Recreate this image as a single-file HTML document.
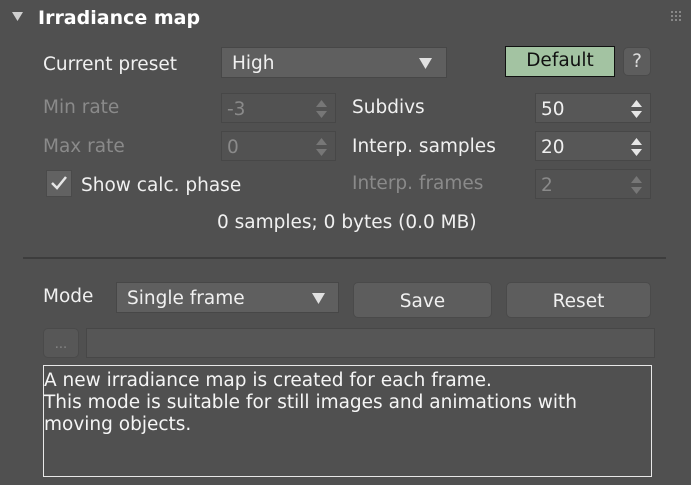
<!DOCTYPE html>
<html><head><style>
body{margin:0;width:691px;height:485px;background:#505050;font-family:"DejaVu Sans","Liberation Sans",sans-serif;color:#f0f0f0;position:relative;overflow:hidden}
.a{position:absolute;white-space:nowrap}
.lbl{font-size:18.5px;line-height:20px;margin-top:2px}
.dis{color:#8a8a8a}
.fld{position:absolute;background:#575757;border:1px solid #474747;box-sizing:border-box}
.fld span{position:absolute;left:5px;top:5px;font-size:18.5px}
.spin{position:absolute;right:8px;top:6px;width:11px;height:18px}
.btn{position:absolute;background:#5d5d5d;border:1px solid #4a4a4a;border-radius:5px;box-sizing:border-box;text-align:center;font-size:18.5px}
</style></head><body>
<svg class="a" style="left:12px;top:12px" width="12" height="10"><polygon points="0,0 11,0 5.5,9" fill="#cfcfcf"/></svg>
<div class="a" style="left:38px;top:7px;font-size:19px;font-weight:bold;color:#fff">Irradiance map</div>
<svg class="a" style="left:671px;top:11px" width="12" height="12" fill="#888"><rect x="0" y="0" width="2" height="2"/><rect x="4" y="0" width="2" height="2"/><rect x="8" y="0" width="2" height="2"/><rect x="0" y="4" width="2" height="2"/><rect x="4" y="4" width="2" height="2"/><rect x="8" y="4" width="2" height="2"/><rect x="0" y="8" width="2" height="2"/><rect x="4" y="8" width="2" height="2"/><rect x="8" y="8" width="2" height="2"/></svg>

<div class="a lbl" style="left:43px;top:53px">Current preset</div>
<div class="fld" style="left:221px;top:47px;width:226px;height:31px;background:#5f5f5f"><span style="left:10px;top:5px">High</span>
<svg style="position:absolute;right:14px;top:10px" width="13" height="11"><polygon points="0,0 13,0 6.5,11" fill="#e0e0e0"/></svg></div>
<div class="a" style="left:505px;top:46px;width:110px;height:31px;background:#a3c3a2;border:1px solid #111;box-sizing:border-box;color:#111;font-size:18.5px;text-align:center;line-height:27px">Default</div>
<div class="btn" style="left:623px;top:47px;width:28px;height:29px;line-height:27px;color:#ddd">?</div>

<div class="a lbl dis" style="left:43px;top:96px">Min rate</div>
<div class="fld" style="left:221px;top:93px;width:115px;height:30px;background:#525252"><span class="dis">-3</span><svg class="spin"><polygon points="5.5,0 11,7 0,7" fill="#777"/><polygon points="0,11 11,11 5.5,18" fill="#777"/></svg></div>
<div class="a lbl dis" style="left:43px;top:135px">Max rate</div>
<div class="fld" style="left:221px;top:131px;width:115px;height:30px;background:#525252"><span class="dis">0</span><svg class="spin"><polygon points="5.5,0 11,7 0,7" fill="#777"/><polygon points="0,11 11,11 5.5,18" fill="#777"/></svg></div>

<div class="a lbl" style="left:352px;top:96px">Subdivs</div>
<div class="fld" style="left:535px;top:93px;width:116px;height:30px"><span>50</span><svg class="spin"><polygon points="5.5,0 11,7 0,7" fill="#e6e6e6"/><polygon points="0,11 11,11 5.5,18" fill="#e6e6e6"/></svg></div>
<div class="a lbl" style="left:352px;top:135px">Interp. samples</div>
<div class="fld" style="left:535px;top:131px;width:116px;height:30px"><span>20</span><svg class="spin"><polygon points="5.5,0 11,7 0,7" fill="#e6e6e6"/><polygon points="0,11 11,11 5.5,18" fill="#e6e6e6"/></svg></div>
<div class="a lbl dis" style="left:352px;top:172px">Interp. frames</div>
<div class="fld" style="left:535px;top:169px;width:116px;height:30px;background:#525252"><span class="dis">2</span><svg class="spin"><polygon points="5.5,0 11,7 0,7" fill="#777"/><polygon points="0,11 11,11 5.5,18" fill="#777"/></svg></div>

<div class="a" style="left:46px;top:170px;width:26px;height:27px;background:#626262;border:1px solid #4a4a4a;box-sizing:border-box"></div>
<svg class="a" style="left:50px;top:175px" width="18" height="16"><path d="M2 8 L7 13 L16 2" stroke="#e6e6e6" stroke-width="2.5" fill="none"/></svg>
<div class="a lbl" style="left:81px;top:174px">Show calc. phase</div>

<div class="a lbl" style="left:217px;top:211px">0 samples; 0 bytes (0.0 MB)</div>
<div class="a" style="left:23px;top:257px;width:643px;height:2px;background:#3d3d3d"></div>

<div class="a lbl" style="left:43px;top:285px">Mode</div>
<div class="fld" style="left:116px;top:282px;width:223px;height:31px;background:#5f5f5f"><span style="left:10px">Single frame</span>
<svg style="position:absolute;right:13px;top:10px" width="13" height="11"><polygon points="0,0 13,0 6.5,11" fill="#e0e0e0"/></svg></div>
<div class="btn" style="left:353px;top:282px;width:139px;height:36px;line-height:37px">Save</div>
<div class="btn" style="left:506px;top:282px;width:145px;height:36px;line-height:37px">Reset</div>

<div class="btn" style="left:43px;top:328px;width:36px;height:30px;line-height:32px;font-size:13px;color:#888;background:#575757">...</div>
<div class="fld" style="left:86px;top:328px;width:569px;height:30px;background:#565656"></div>

<div class="a" style="left:43px;top:365px;width:609px;height:112px;border:1px solid #e8e8e8;box-sizing:border-box;font-size:18.5px;line-height:22px;padding:4px 0 0 0;white-space:normal;color:#f5f5f5">A new irradiance map is created for each frame.<br>This mode is suitable for still images and animations with<br>moving objects.</div>
</body></html>
